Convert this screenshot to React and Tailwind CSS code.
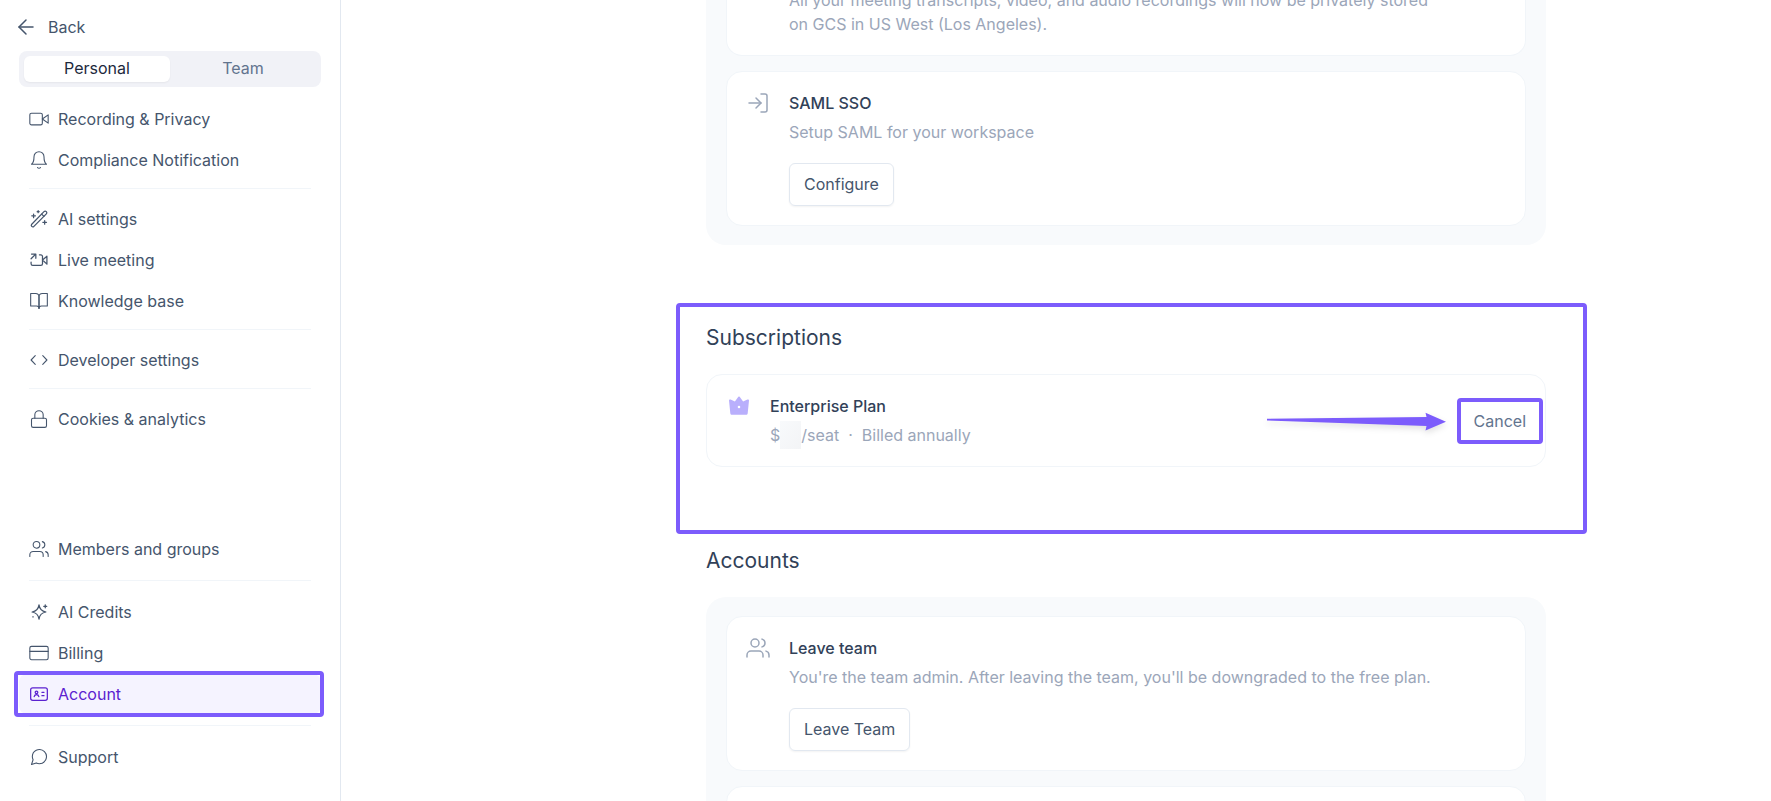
import { useState } from "react";
import {
  FiArrowLeft,
  FiBell,
  FiBookOpen,
  FiCreditCard,
  FiLock,
  FiLogIn,
  FiMessageCircle,
  FiUsers,
  FiVideo,
} from "react-icons/fi";

const Svg = ({ children }) => (
  <svg
    viewBox="0 0 24 24"
    className="size-5 shrink-0"
    fill="none"
    stroke="currentColor"
    strokeWidth="1.5"
    strokeLinecap="round"
    strokeLinejoin="round"
  >
    {children}
  </svg>
);

const WandIcon = () => (
  <Svg>
    <path d="M3 18.6 18 3.2a1.9 1.9 0 0 1 2.8 2.7L5.6 21.2a1.9 1.9 0 0 1-2.6-2.6Z" />
    <path d="m15.2 6.2 2.7 2.7M5.5 6v4.4M3.3 8.2h4.4M11 2v2.4M9.8 3.2h2.4M18.8 13.8v4.4M16.6 16H21" />
  </Svg>
);

const LiveIcon = () => (
  <Svg>
    <path d="M2.5 10.5 7.8 5.2M3 4.8h5.2V10M12.5 5.8h1.7a2 2 0 0 1 2 2v8.6a2 2 0 0 1-2 2H4.5a2 2 0 0 1-2-2v-2" />
    <path d="m16.2 12 5.3-4.6v9.6Z" />
  </Svg>
);

const CodeIcon = () => (
  <Svg>
    <path d="m7.5 6.8-5 5.2 5 5.2M16.5 6.8l5 5.2-5 5.2" strokeWidth="1.3" />
  </Svg>
);

const SparklesIcon = () => (
  <Svg>
    <path d="M12 3.5c.7 5 2.9 7.6 8.3 8.5-5.4.9-7.6 3.5-8.3 8.5-.7-5-2.9-7.6-8.3-8.5 5.4-.9 7.6-3.5 8.3-8.5Z" />
    <path d="M19.5 3.4V7M17.7 5.2h3.6M4.8 17.4v.6" />
  </Svg>
);

const IdIcon = () => (
  <Svg>
    <rect x="2" y="4.5" width="20" height="15" rx="2.5" />
    <circle cx="9" cy="10" r="1.6" />
    <path d="M6.2 15.2c.4-1.7 1.4-2.4 2.8-2.4s2.4.7 2.8 2.4M15.5 10H18M15.5 14H18" />
  </Svg>
);

const CrownIcon = () => (
  <svg viewBox="0 0 24 24" className="size-6" fill="#b9affc">
    <path
      fillRule="evenodd"
      d="M12 2.6c.5 0 .9.3 1.2.8l2.9 4.1 4.3-2c.9-.3 1.7.2 1.6 1.1l-1.3 12.6c-.1 1-.8 1.6-1.7 1.6H5c-.9 0-1.6-.6-1.7-1.6L2 6.600c-.1-.9.7-1.4 1.6-1.1l4.3 2 2.9-4.1c.3-.5.7-.8 1.2-.8Zm0 9.1a1.3 1.3 0 1 0 0 2.6 1.3 1.3 0 0 0 0-2.6Z"
    />
  </svg>
);

const topGroups = [
  [
    { label: "Recording & Privacy", icon: FiVideo },
    { label: "Compliance Notification", icon: FiBell },
  ],
  [
    { label: "AI settings", icon: WandIcon },
    { label: "Live meeting", icon: LiveIcon },
    { label: "Knowledge base", icon: FiBookOpen },
  ],
  [{ label: "Developer settings", icon: CodeIcon }],
  [{ label: "Cookies & analytics", icon: FiLock }],
];

const bottomGroups = [
  [{ label: "Members and groups", icon: FiUsers }],
  [
    { label: "AI Credits", icon: SparklesIcon },
    { label: "Billing", icon: FiCreditCard },
    { label: "Account", icon: IdIcon, active: true },
  ],
  [{ label: "Support", icon: FiMessageCircle }],
];

function NavItem({ label, icon: Icon, active }) {
  return (
    <a
      href="#"
      className={`relative flex h-10 items-center gap-[9px] rounded-lg px-2.5 ${
        active ? "bg-[#f5f3ff] text-[#5b21d0]" : "text-slate-600"
      }`}
    >
      <Icon className="size-5 shrink-0" strokeWidth={1.3} />
      {label}
      {active && (
        <span className="pointer-events-none absolute -inset-y-[3px] -right-[3px] -left-[5px] rounded border-4 border-[#7c5cfc]" />
      )}
    </a>
  );
}

function NavGroups({ groups, divider }) {
  return groups.map((group, i) => (
    <div key={i} className="flex flex-col gap-px">
      {i > 0 && <hr className={`mx-2.5 border-slate-100 ${divider}`} />}
      {group.map((item) => (
        <NavItem key={item.label} {...item} />
      ))}
    </div>
  ));
}

function Sidebar() {
  const [tab, setTab] = useState("Personal");

  return (
    <aside className="flex w-[341px] shrink-0 flex-col border-r border-slate-200 px-[19px] pt-[15px] pb-6">
      <a href="#" className="flex h-6 items-center gap-2.5 text-slate-600">
        <FiArrowLeft className="-ml-[5px] size-6" strokeWidth={1.5} />
        Back
      </a>
      <div className="mt-3 flex h-9 rounded-lg bg-[#f1f2f7] p-[5px]">
        {["Personal", "Team"].map((name) => (
          <button
            key={name}
            onClick={() => setTab(name)}
            className={`flex-1 rounded-md pb-0.5 leading-6 ${
              tab === name ? "bg-white text-slate-800 shadow-xs" : "text-slate-500"
            }`}
          >
            {name}
          </button>
        ))}
      </div>
      <nav className="mt-3 flex flex-1 flex-col">
        <NavGroups groups={topGroups} divider="mt-2 mb-[9px]" />
        <div className="mt-auto">
          <NavGroups groups={bottomGroups} divider="mt-[11px] mb-2.5" />
        </div>
      </nav>
    </aside>
  );
}

function Card({ icon, title, text, action }) {
  return (
    <div className="flex gap-[19px] rounded-2xl border border-slate-100 bg-white p-[19px]">
      <div className="w-6 shrink-0 text-[#9ba6b9]">{icon}</div>
      <div>
        <h3 className="font-medium text-slate-700">{title}</h3>
        <p className="mt-[5px] text-[#9ba6b9]">{text}</p>
        <button className="mt-[19px] h-[43px] rounded-md border border-slate-200 px-3.5 pb-0.5 text-slate-600 shadow-xs">
          {action}
        </button>
      </div>
    </div>
  );
}

function Arrow() {
  return (
    <svg
      viewBox="0 0 180 24"
      className="mr-7 h-6 w-[180px] shrink-0 overflow-visible drop-shadow-md"
      fill="#7c5cfc"
    >
      <path d="M1 9.8 160.5 8l-1-4.3 20.5 9-20.5 8.7 1-4.4L1 11.5Z" />
    </svg>
  );
}

export default function App() {
  return (
    <div className="flex h-screen overflow-hidden bg-white font-['Inter',sans-serif] text-base leading-6">
      <Sidebar />
      <main className="min-w-0 flex-1 overflow-hidden pl-[140px]">
        <div className="mx-auto max-w-[840px]">
          <section className="-mt-3 rounded-b-[20px] bg-slate-50 px-5 pb-[19px]">
            <div className="rounded-b-2xl border border-t-0 border-slate-100 bg-white pr-[19px] pb-[19px] pl-[62px]">
              <p className="max-w-[656px] text-[#9ba6b9]">
                All your meeting transcripts, video, and audio recordings will now be privately
                stored on GCS in US West (Los Angeles).
              </p>
            </div>
            <div className="mt-[15px]">
              <Card
                icon={<FiLogIn className="size-6" strokeWidth={1.5} />}
                title="SAML SSO"
                text="Setup SAML for your workspace"
                action="Configure"
              />
            </div>
          </section>

          <section className="relative mt-[78px]">
            <h2 className="text-[21px] leading-[30px] text-slate-700">Subscriptions</h2>
            <div className="mt-[21px] flex items-center rounded-2xl border border-slate-100 py-[19px] pr-[19px] pl-5">
              <div className="mr-[19px] w-6 self-start">
                <CrownIcon />
              </div>
              <div className="flex-1">
                <h3 className="font-medium text-slate-700">Enterprise Plan</h3>
                <p className="mt-[5px] flex items-center text-[#9ba6b9]">
                  $
                  <span className="-my-1 h-7 w-[21px] bg-linear-to-br from-slate-50 to-gray-100" />
                  /seat&nbsp; ·&nbsp; Billed annually
                </p>
              </div>
              <Arrow />
              <button className="relative text-slate-500">
                Cancel
                <span className="pointer-events-none absolute -inset-x-[17px] -inset-y-[11px] rounded border-4 border-[#7c5cfc]" />
              </button>
            </div>
            <div className="pointer-events-none absolute -top-5 -right-[41px] -bottom-[67px] -left-[30px] rounded border-4 border-[#7c5cfc]" />
          </section>

          <section className="mt-[79px]">
            <h2 className="text-[21px] leading-[30px] text-slate-700">Accounts</h2>
            <div className="mt-[21px] flex flex-col gap-[15px] rounded-[20px] bg-slate-50 px-5 py-[19px]">
              <Card
                icon={<FiUsers className="size-6" strokeWidth={1.5} />}
                title="Leave team"
                text="You're the team admin. After leaving the team, you'll be downgraded to the free plan."
                action="Leave Team"
              />
              <div className="h-[155px] rounded-2xl border border-slate-100 bg-white" />
            </div>
          </section>
        </div>
      </main>
    </div>
  );
}
